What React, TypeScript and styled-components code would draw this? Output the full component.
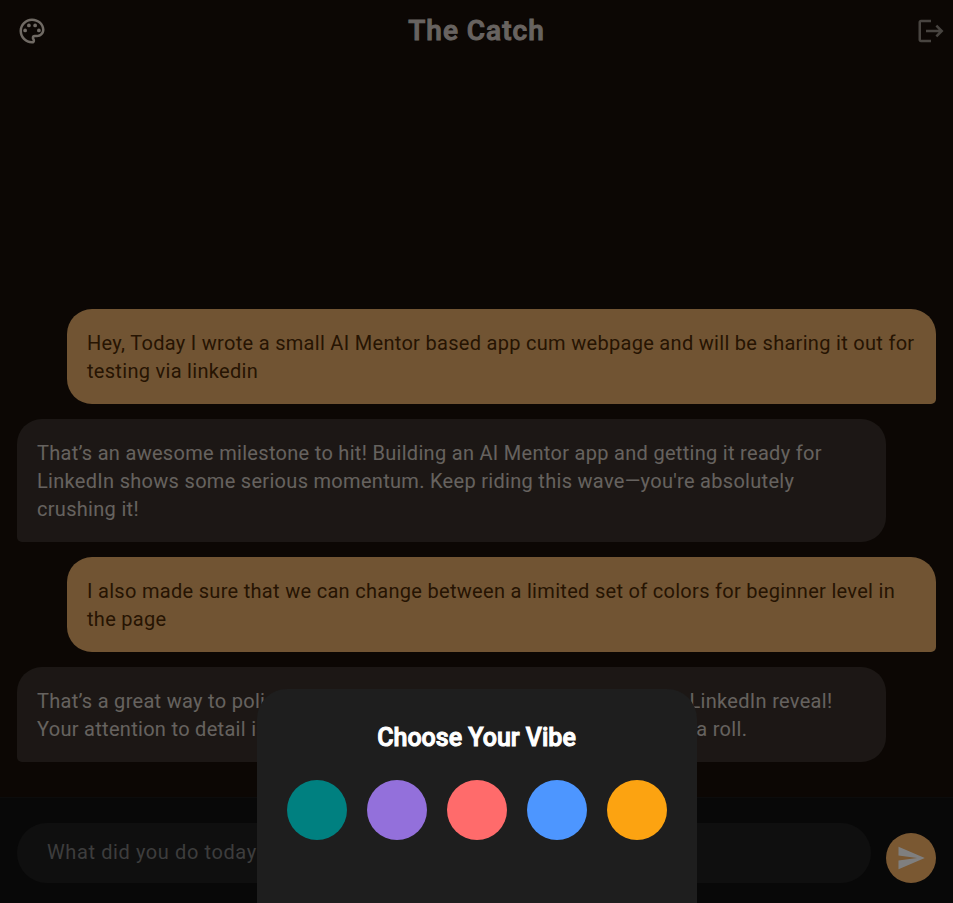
import React from "react";
import styled, { createGlobalStyle } from "styled-components";
import { MdLogout, MdOutlinePalette, MdSend } from "react-icons/md";

const GlobalStyle = createGlobalStyle`
  * { box-sizing: border-box; }
  body { margin: 0; background: #180f09; font-family: Roboto, sans-serif; }
`;

const Page = styled.div`
  display: flex;
  flex-direction: column;
  height: 100vh;
  overflow: hidden;
  background: #180f09;
`;

const Header = styled.header`
  display: grid;
  grid-template-columns: 1fr auto 1fr;
  align-items: center;
  height: 62px;
  padding: 0 6px;
`;

const Title = styled.h1`
  margin: 0;
  color: #d0c6c0;
  font-size: 28px;
  font-weight: 500;
  line-height: 36px;
  letter-spacing: 1px;
  -webkit-text-stroke: 1px currentColor;
`;

const IconButton = styled.button<{ $tone: string; $side: "start" | "end" }>`
  display: grid;
  place-items: center;
  justify-self: ${(p) => p.$side};
  width: ${(p) => (p.$side === "start" ? 52 : 32)}px;
  height: 32px;
  padding: 0;
  border: 0;
  background: none;
  color: ${(p) => p.$tone};
  cursor: pointer;
`;

const Messages = styled.main`
  display: flex;
  flex: 1;
  flex-direction: column;
  justify-content: flex-end;
  gap: 15px;
  padding: 0 17px 35px;
`;

const Bubble = styled.p<{ $mine: boolean }>`
  margin: ${(p) => (p.$mine ? "0 0 0 50px" : "0 50px 0 0")};
  padding: 20px 20px 19px;
  border-radius: ${(p) => (p.$mine ? "25px 25px 5px 25px" : "25px 25px 25px 5px")};
  background: ${(p) => (p.$mine ? "#e2a866" : "#382f2a")};
  color: ${(p) => (p.$mine ? "#4c2804" : "#ccc4be")};
  font-size: 20px;
  line-height: 28px;
  letter-spacing: 0.015em;
`;

const Composer = styled.form`
  display: flex;
  align-items: flex-end;
  gap: 15px;
  padding: 25px 17px 20px;
  border-top: 1px solid #181818;
  background: #101010;
`;

const Entry = styled.input`
  flex: 1;
  min-width: 0;
  height: 60px;
  padding: 0 30px 2px;
  border: 0;
  border-radius: 30px;
  background: #1e1e1e;
  color: #ffffff;
  font: 400 20px Roboto, sans-serif;
  letter-spacing: 0.03em;
  &::placeholder { color: #7a7a7a; opacity: 1; }
`;

const SendButton = styled.button`
  display: grid;
  place-items: center;
  width: 50px;
  height: 50px;
  padding: 0;
  border: 0;
  border-radius: 50%;
  background: #f4b065;
  color: #ffffff;
  cursor: pointer;
`;

const Scrim = styled.div`
  position: fixed;
  inset: 0;
  display: flex;
  align-items: flex-end;
  justify-content: center;
  background: rgba(0, 0, 0, 0.5);
`;

const Sheet = styled.section`
  padding: 30px 30px 63px;
  border-radius: 30px 30px 0 0;
  background: #1e1e1e;
`;

const SheetTitle = styled.h2`
  margin: 0;
  padding: 1px 0 24px;
  color: #ffffff;
  font-size: 25px;
  font-weight: 500;
  line-height: 36px;
  text-align: center;
  -webkit-text-stroke: 1px currentColor;
`;

const Swatches = styled.div`
  display: flex;
  gap: 20px;
`;

const Swatch = styled.button<{ $color: string }>`
  width: 60px;
  height: 60px;
  padding: 0;
  border: 0;
  border-radius: 50%;
  background: ${(p) => p.$color};
  cursor: pointer;
`;

const messages = [
  {
    mine: true,
    text: "Hey, Today I wrote a small AI Mentor based app cum webpage and will be sharing it out for testing via linkedin",
  },
  {
    mine: false,
    text: "That’s an awesome milestone to hit! Building an AI Mentor app and getting it ready for LinkedIn shows some serious momentum. Keep riding this wave—you're absolutely crushing it!",
  },
  {
    mine: true,
    text: "I also made sure that we can change between a limited set of colors for beginner level in the page",
  },
  {
    mine: false,
    text: "That’s a great way to polish the user experience and prep it for your big LinkedIn reveal! Your attention to detail is really paying off greatly and you are clearly on a roll.",
  },
];

const vibes = [
  { name: "Teal", color: "#008080" },
  { name: "Purple", color: "#9370db" },
  { name: "Coral", color: "#ff6b6b" },
  { name: "Blue", color: "#4d96ff" },
  { name: "Orange", color: "#fca311" },
];

export default function App() {
  return (
    <>
      <GlobalStyle />
      <Page>
        <Header>
          <IconButton type="button" aria-label="Choose theme" $tone="#e0d4c8" $side="start">
            <MdOutlinePalette size={30} />
          </IconButton>
          <Title>The Catch</Title>
          <IconButton type="button" aria-label="Log out" $tone="#908880" $side="end">
            <MdLogout size={30} />
          </IconButton>
        </Header>
        <Messages>
          {messages.map((m) => (
            <Bubble key={m.text} $mine={m.mine}>
              {m.text}
            </Bubble>
          ))}
        </Messages>
        <Composer onSubmit={(e) => e.preventDefault()}>
          <Entry aria-label="Message" placeholder="What did you do today?" />
          <SendButton type="submit" aria-label="Send">
            <MdSend size={30} />
          </SendButton>
        </Composer>
      </Page>
      <Scrim>
        <Sheet role="dialog" aria-modal="true" aria-labelledby="vibe-title">
          <SheetTitle id="vibe-title">Choose Your Vibe</SheetTitle>
          <Swatches>
            {vibes.map((v) => (
              <Swatch key={v.name} type="button" aria-label={v.name} $color={v.color} />
            ))}
          </Swatches>
        </Sheet>
      </Scrim>
    </>
  );
}
